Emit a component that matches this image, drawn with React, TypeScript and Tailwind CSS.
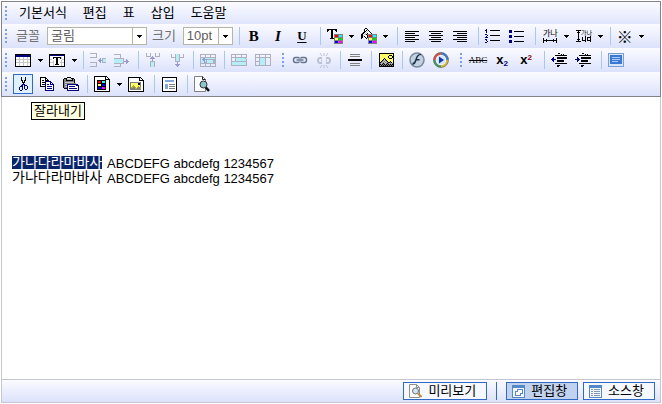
import type { ReactNode } from "react";

const PALETTE: Record<string, string> = {
  k: "#000000",
  w: "#ffffff",
  g: "#808080",
  s: "#c6c6c6",
  n: "#000080",
  y: "#ffff66",
  o: "#b8b02a",
  r: "#ff0000",
  c: "#00ffff",
  l: "#00e000",
  b: "#0000ff",
  m: "#ff00ff",
  a: "#aeb0bf",
  t: "#b6eef8",
  v: "#9a98d6",
  i: "#e8e4d8",
  p: "#7fa8dc",
};

function Bitmap({ rows }: { rows: string[] }) {
  const width = Math.max(...rows.map((row) => row.length));
  const cells: ReactNode[] = [];
  rows.forEach((row, y) => {
    let x = 0;
    while (x < row.length) {
      let end = x + 1;
      while (end < row.length && row[end] === row[x]) end += 1;
      if (row[x] !== ".") {
        cells.push(<rect key={`${x}-${y}`} x={x} y={y} width={end - x} height={1} fill={PALETTE[row[x]]} />);
      }
      x = end;
    }
  });
  return (
    <svg width={width} height={rows.length} viewBox={`0 0 ${width} ${rows.length}`} shapeRendering="crispEdges" aria-hidden="true">
      {cells}
    </svg>
  );
}

const TABLE = [
  "kkkkkkkkkkkkkkkk",
  "knnnnnnnnnnnnnnk",
  "knnnnnnnnnnnnnnk",
  "kwwwswwwswwwswwk",
  "kwwwswwwswwwswwk",
  "kssssssssssssssk",
  "kwwwswwwswwwswwk",
  "kwwwswwwswwwswwk",
  "kssssssssssssssk",
  "kwwwswwwswwwswwk",
  "kwwwswwwswwwswwk",
  "kwwwswwwswwwswwk",
  "kkkkkkkkkkkkkkkk",
];

const TEXT_TABLE = [
  "kkkkkkkkkkkkkkkk",
  "knnnnnnnnnnnnnnk",
  "kwwwwwwwwwwwwwwk",
  "kwwwkkkkkkkkswwk",
  "kwwwkwwkkwwkswwk",
  "ksswwwwkkwwwwssk",
  "kwwwswwkkwwwswwk",
  "kwwwswwkkwwwswwk",
  "ksssswwkkwwssssk",
  "kwwwswwkkwwwswwk",
  "kwwwswkkkkwwswwk",
  "kwwwswwwwwwwswwk",
  "kkkkkkkkkkkkkkkk",
];

const ROW_INSERT = [
  "aaaaaaa.........",
  "......a.........",
  "......a.........",
  "......a.........",
  "aaaaaaa.........",
  "..........v.aaaa",
  ".........vv.attt",
  "........vvvvattt",
  ".........vv.attt",
  "aaaaaaa...v.aaaa",
  "......a.........",
  "......a.........",
  "......a.........",
  "aaaaaaa.........",
];

const ROW_DELETE = [
  "aaaaaaa.........",
  "......a.........",
  "......a.........",
  "......a.........",
  "aaaaaaaaaa......",
  "ttttttttta..v...",
  "ttttttttta..vv..",
  "tttttttttavvvvv.",
  "ttttttttta..vv..",
  "aaaaaaaaaa..v...",
  "......a.........",
  "......a.........",
  "aaaaaaa.........",
];

const COL_INSERT = [
  "a...a....a...a",
  "a...a....a...a",
  "a...a....a...a",
  "aaaaa.v..aaaaa",
  ".....vvv......",
  "....vvvvv.....",
  "......v.......",
  "......v.......",
  "....aaaaa.....",
  "....attta.....",
  "....attta.....",
  "....attta.....",
  "....attta.....",
  "....attta.....",
];

const COL_DELETE = [
  "a...attta...a",
  "a...attta...a",
  "a...attta...a",
  "aaaaatttaaaaa",
  "....attta....",
  "....attta....",
  "....attta....",
  "....aaaaa....",
  "......v......",
  "......v......",
  "....vvvvv....",
  ".....vvv.....",
  "......v......",
];

const CELL_PROPERTY = [
  "aaaaaaaaaaaaaaaa",
  "a....a....a....a",
  "a....a....a....a",
  "aaaaaaaaaaaaaaaa",
  "attvvtttttttttta",
  "atvvvvvaaaaaaaaa",
  "attvvtattttttaaa",
  "atttvtattttttaaa",
  "atttvvattttttaaa",
  "aaaaaaaaaaaaaaaa",
  "a....a....a....a",
  "a....a....a....a",
  "aaaaaaaaaaaaaaaa",
];

const CELL_MERGE = [
  "aaaaaaaaaaaaaaaa",
  "a...a.....a....a",
  "a...a.....a....a",
  "aaaaaaaaaaaaaaaa",
  "a...attttttttta.",
  "a...atttttttttta",
  "a...atttttttttta",
  "aaaaaaaaaaaaaaaa",
  "atttttttttttttta",
  "atttttttttttttta",
  "atttttttttttttta",
  "aaaaaaaaaaaaaaaa",
];

const CELL_SPLIT = [
  "aaaaaaaaaaaaaaaa",
  "a...a.....a....a",
  "a...a.....a....a",
  "aaaaaaaaaaaaaaaa",
  "a...attttta....a",
  "a...attttta....a",
  "a...attttta....a",
  "aaaaattttta....a",
  "a...attttta....a",
  "a...attttta....a",
  "a...attttta....a",
  "aaaaaaaaaaaaaaaa",
];

const CUT = [
  "..k...k..",
  "..k...k..",
  "..k...k..",
  "..kk.kk..",
  "...k.k...",
  "...kkk...",
  "....k....",
  "...nnn...",
  "..nn.nnn.",
  ".nnn.n..n",
  "n..n.n..n",
  "n..n.n..n",
  "n..n..nn.",
  ".nn......",
];

const COPY = [
  "kkkkkk.........",
  "kwwwwkk........",
  "kwwwwkwk.......",
  "kwkkwkkkk......",
  "kwwwwnnnnnn....",
  "kwkkknwwwwnn...",
  "kwwwwnwwwwnwn..",
  "kwkkknwnnwnnnn.",
  "kwwwwnwwwwwwwn.",
  "kkkkknwnnnnnwn.",
  ".....nwwwwwwwn.",
  ".....nwnnnnnwn.",
  ".....nwwwwwwwn.",
  ".....nnnnnnnnn.",
];

const PASTE = [
  "....kkkk........",
  ".kkkswwskkk.....",
  "kggkssssskgk....",
  "kggkkkkkkkgk....",
  "kggggggggggk....",
  "kgsssssssssk....",
  "kgggggggggggg...",
  "kgssnnnnnnnnnnn.",
  "kgggnwwwwwwwwnnn",
  "kgssnwnnnnnnwwwn",
  "kgggnwwwwwwwwwwn",
  ".kkknwnnnnnnnnwn",
  "....nwwwwwwwwwwn",
  "....nnnnnnnnnnnn",
];

const COLOR_DOC = [
  "kkkkkkkkkkkkk...",
  "kwwwwwwwwwwkwk..",
  "kwwwwwwwwwwkwwk.",
  "kwwwwwwwwwwkkkkk",
  "kwwkkkkkkkkkwwwk",
  "kwwkrrrkccckwwwk",
  "kwwkrrrkccckwwwk",
  "kwwkkkkkkkkkwwwk",
  "kwwkyyykbbbkwwwk",
  "kwwkyyykbbbkwwwk",
  "kwwkkkkkkkkkwwwk",
  "kwwkbbbkmmmkwwwk",
  "kwwkbbbkmmmkwwwk",
  "kwwkkkkkkkkkwwwk",
  "kwwwwwwwwwwwwwwk",
  "kkkkkkkkkkkkkkkk",
];

const IMAGE_DOC = [
  "kkkkkkkkkkkkk...",
  "kwwwwwwwwwwkwk..",
  "kwwwwwwwwwwkwwk.",
  "kwwwwwwwwwwkkkkk",
  "kwwwwwwwwwwwwwwk",
  "kwgggggggggggwwk",
  "kwgyyyyyyykkgwwk",
  "kwgyyyyyyykkgwwk",
  "kwgyyoyyyyyygwwk",
  "kwgyoooyyyoygwwk",
  "kwgooggoyoggowwk",
  "kwgggggoogggowwk",
  "kwgggggggggggwwk",
  "kwwwwwwwwwwwwwwk",
  "kkkkkkkkkkkkkkkk",
];

const LAYOUT = [
  "kkkkkkkkkkkkkkk",
  "kwwwwwwwwwwwwwk",
  "kwwwwwwwwwwwwwk",
  "kwwpppppppppwwk",
  "kwwpppppppppwwk",
  "kwwwwwwwwwwwwwk",
  "kwwwwwwwwwwwwwk",
  "kwwpppwggggggwk",
  "kwwpppwwwwwwwwk",
  "kwwpppwggggggwk",
  "kwwpppwwwwwwwwk",
  "kwwpppwggggggwk",
  "kwwwwwwwwwwwwwk",
  "kwwwwwwwwwwwwwk",
  "kkkkkkkkkkkkkkk",
];

const PICTURE = [
  "kkkkkkkkkkkkkkk",
  "kyyyyyyyyyyyyyk",
  "kyyyyyyyyykkkyk",
  "kyyyyyyyykyyykk",
  "kyyyyyyyykyyykk",
  "kyyyykyyyykkkyk",
  "kyyykskyyyyyyyk",
  "kyykgsgkyyyyyyk",
  "kykgsgsgkyykyyk",
  "kkgsgsgsgkkgkyk",
  "kgsgkgsgkgsgsgk",
  "kkgkgkgkgkgkgkk",
  "kgkgkgkgkgkgkgk",
  "kkkkkkkkkkkkkkk",
];

const RULE = [
  "..gggggggggg..",
  "..............",
  "..gggggggggg..",
  "..............",
  "..............",
  "kkkkkkkkkkkkkk",
  "kkkkkkkkkkkkkk",
  "..............",
  "..............",
  "..gggggggggg..",
  "..............",
  "..gggggggggg..",
];

const FONT_COLOR = [
  "kkkkkkkkkk......",
  "kk..kk..kk......",
  "k...kk...k......",
  "....kk..........",
  "....kk..........",
  "....kk.ggggggggg",
  "....kk.grrrgcccg",
  "....kk.grrrgcccg",
  "....kk.ggggggggg",
  "...kkkkgyyyglllg",
  ".......gyyyglllg",
  ".......ggggggggg",
  ".......gbbbgmmmg",
  ".......gbbbgmmmg",
  ".......ggggggggg",
];

const FILL_COLOR = [
  "....kk..........",
  "...k..k.........",
  "...k.kwk........",
  "...kkwswk.......",
  "..kkwswwwk......",
  ".kkwswkwwwk.....",
  "kkwsskgggggggggg",
  "kkswwwkgrrrgcccg",
  "kk.kwwkgrrrgcccg",
  "kk..kwkggggggggg",
  "k....k.gyyyglllg",
  ".......gyyyglllg",
  ".......ggggggggg",
  ".......gbbbgmmmg",
  ".......gbbbgmmmg",
  ".......ggggggggg",
];

const ALIGN_LEFT = [
  "kkkkkkkkkkkkkk",
  "..............",
  "kkkkkkkkkk....",
  "..............",
  "kkkkkkkkkkkkkk",
  "..............",
  "kkkkkkkkkk....",
  "..............",
  "kkkkkkkkkkkkkk",
  "..............",
  "kkkkkkkkkk....",
];

const ALIGN_CENTER = ALIGN_LEFT.map((row, index) => (index % 4 === 2 ? "..kkkkkkkkkk.." : row));
const ALIGN_RIGHT = ALIGN_LEFT.map((row, index) => (index % 4 === 2 ? "....kkkkkkkkkk" : row));

const ORDERED = [
  ".n.............",
  "nn...kkkkkkkkkk",
  ".n.............",
  ".n.............",
  "...............",
  "nn.............",
  "..n..kkkkkkkkkk",
  ".n.............",
  "nnn............",
  "...............",
  "nn.............",
  ".n...kkkkkkkkkk",
  "..n............",
  "nn.............",
];

const BULLETS = [
  "nnn............",
  "nnn..kkkkkkkkkk",
  "nnn............",
  "...............",
  "...............",
  "nnn............",
  "nnn..kkkkkkkkkk",
  "nnn............",
  "...............",
  "...............",
  "nnn............",
  "nnn..kkkkkkkkkk",
  "nnn............",
];

const OUTDENT = [
  ".......kk.......",
  "..........k.k...",
  "....kkkkkkkkkkkk",
  "................",
  "..n...kkkkkkkkkk",
  ".nn...kkkkkkkkkk",
  "nnnnn...........",
  ".nn...kkkkkkk...",
  "..n...kkkkkkk...",
  "................",
  "....kkkkkkkkkkkk",
  "................",
  "......kkk.......",
  "......kk........",
];

const INDENT = OUTDENT.map((row, index) => {
  if (index === 4 || index === 8) return "..n" + row.slice(3);
  if (index === 5 || index === 7) return "..nn" + row.slice(4);
  return row;
});

function Arrow() {
  return (
    <svg width="5" height="3" viewBox="0 0 5 3" shapeRendering="crispEdges" aria-hidden="true">
      <path d="M0 0h5v1H0zM1 1h3v1H1zM2 2h1v1H2z" />
    </svg>
  );
}

function LinkIcon({ broken = false }: { broken?: boolean }) {
  return (
    <svg width="16" height="16" viewBox="0 0 16 16" fill="none" aria-hidden="true">
      <g stroke={broken ? "#bcc2d6" : "#66758f"} strokeWidth={broken ? 2 : 1.5}>
        <path d={broken ? "M6 6H4Q2 6 2 8.500T4 11H6M10 6h2q2 0 2 2.500T12 11h-2" : "M7.500 6.500Q7 5.500 6 5.500H3.500Q1.500 5.500 1.500 8T3.500 10.500H6Q7 10.500 7.500 9.500M8.500 6.500Q9 5.500 10 5.500h2.500q2 0 2 2.500t-2 2.500H10Q9 10.500 8.500 9.500"} />
        <path d={broken ? "M5 8.500h1M10 8.500h1" : "M4.500 8h7"} />
      </g>
      {broken && <path d="M8 1v3M4 1l2 3M12 1l-2 3M8 13v3M4 16l2-3M12 16l-2-3" stroke="#bcc2d6" />}
    </svg>
  );
}

function FlashIcon() {
  return (
    <svg width="16" height="16" viewBox="0 0 16 16" aria-hidden="true">
      <circle cx="8" cy="8" r="7" fill="#c3d2e0" stroke="#76899c" strokeWidth="1.500" />
      <path d="M12 3Q9 3 8 7H10.500V8.500H7.500Q6.500 12.500 3.500 13V11Q5.500 10.500 7 5.500Q8.500 1.500 12 2z" fill="#18304c" />
    </svg>
  );
}

function MediaIcon() {
  return (
    <svg width="16" height="16" viewBox="0 0 16 16" fill="none" aria-hidden="true">
      <circle cx="8" cy="8" r="6.500" fill="#fff" />
      <g strokeWidth="2.500">
        <path d="M1.500 8A6.500 6.500 0 0 1 8 1.500" stroke="#d8553a" />
        <path d="M8 1.500A6.500 6.500 0 0 1 14.500 8" stroke="#477bc4" />
        <path d="M14.500 8A6.500 6.500 0 0 1 8 14.500" stroke="#d4b440" />
        <path d="M8 14.500A6.500 6.500 0 0 1 1.500 8" stroke="#4c9a58" />
      </g>
      <circle cx="8" cy="8" r="7.500" stroke="#4a6078" strokeWidth="0.500" />
      <circle cx="8" cy="8" r="4.500" fill="#d5e6ff" />
      <path d="M6 4.500L11 8l-5 3.500z" fill="#1237b4" />
    </svg>
  );
}

function SearchDoc() {
  return (
    <svg width="16" height="16" viewBox="0 0 16 16" fill="none" aria-hidden="true">
      <path d="M.5 15.500V.5H8.500L11.500 3.500V15.500z" fill="#fff" stroke="#808080" />
      <path d="M8.500.5v3h3" stroke="#202020" />
      <path d="M11.500 11l3.500 4" stroke="#101010" strokeWidth="2.500" />
      <circle cx="9.500" cy="8.500" r="3.500" fill="#8fc6cc" stroke="#303030" />
    </svg>
  );
}

function PreviewIcon() {
  return (
    <svg width="13" height="14" viewBox="0 0 13 14" fill="none" aria-hidden="true">
      <path d="M.5 13.500V.5H7.500L10.500 3.500V13.500z" fill="#fff" stroke="#909090" />
      <path d="M7.500.5v3h3" stroke="#909090" />
      <path d="M9 9.500l3.500 3.500" stroke="#c98a3c" strokeWidth="2" />
      <circle cx="6.500" cy="7" r="3" fill="#cfe6fa" stroke="#707070" />
    </svg>
  );
}

function ScreenIcon() {
  return (
    <svg width="16" height="14" viewBox="0 0 16 14" shapeRendering="crispEdges" aria-hidden="true">
      <path d="M0 0h16v14H0z" fill="#7d9fce" />
      <path d="M1 1h14v12H1z" fill="#d5e5fa" />
      <path d="M2 2h12v9H2z" fill="#3c78d8" />
      <path d="M4 4h8v1H4zM4 6h8v1H4zM4 8h6v1H4z" fill="#a8ccff" />
    </svg>
  );
}

function SpacingIcon({ vertical = false }: { vertical?: boolean }) {
  return (
    <svg width="18" height="22" viewBox="-1 -3 18 22" aria-hidden="true">
      {vertical ? (
        <>
          <text x="5" y="7" fontSize="6" fontFamily="'Noto Sans CJK KR', sans-serif">가나</text>
          <path d="M0 2h5v1H0zM0 13h5v1H0zM2 3h1v10H2zM1 4h3v1H1zM1 11h3v1H1z" shapeRendering="crispEdges" />
          <path d="M6 9h1v4H6zM6 12h3v1H6zM9 8h1v6H9zM11 9h3v1h-3zM11 12h3v1h-3zM11 9h1v4h-1zM14 8h1v6h-1z" shapeRendering="crispEdges" />
        </>
      ) : (
        <>
          <text x="1" y="8" fontSize="8" fontFamily="'Noto Sans CJK KR', sans-serif">가나</text>
          <path d="M1 10h1v5H1zM14 10h1v5h-1zM2 12h12v1H2zM4 11h1v3H4zM11 11h1v3h-1z" shapeRendering="crispEdges" />
        </>
      )}
    </svg>
  );
}

function WindowIcon() {
  return (
    <svg width="13" height="13" viewBox="0 0 13 13" shapeRendering="crispEdges" aria-hidden="true">
      <path d="M0 0h13v13H0z" fill="#5588c6" />
      <path d="M1 3h11v9H1z" fill="#f4f9ff" />
      <path d="M5 4h6v5H5zM3 6h6v5H3z" fill="#5588c6" />
      <path d="M6 5h4v3H6zM4 7h4v3H4z" fill="#fff" />
    </svg>
  );
}

function SourceIcon() {
  return (
    <svg width="13" height="13" viewBox="0 0 13 13" shapeRendering="crispEdges" aria-hidden="true">
      <path d="M0 0h13v13H0z" fill="#5588c6" />
      <path d="M1 3h11v9H1z" fill="#f4f9ff" />
      <path d="M2 4h2v1H2zM5 4h6v1H5zM2 6h2v1H2zM5 6h6v1H5zM2 8h2v1H2zM5 8h6v1H5zM2 10h2v1H2zM5 10h6v1H5z" fill="#8397b0" />
    </svg>
  );
}

function Grip() {
  return (
    <span className="ml-[3px] mr-1 flex w-0.5 shrink-0 flex-col gap-0.5" aria-hidden="true">
      <span className="h-0.5 bg-[#7d9fe4]" />
      <span className="h-0.5 bg-[#7d9fe4]" />
      <span className="h-0.5 bg-[#7d9fe4]" />
      <span className="h-0.5 bg-[#7d9fe4]" />
    </span>
  );
}

function Sep({ wide = false }: { wide?: boolean }) {
  return <span className={`${wide ? "ml-1.5" : "ml-1"} mr-0.5 h-[18px] w-px shrink-0 bg-[#a9c6f5]`} aria-hidden="true" />;
}

function Tool({ label, children, disabled }: { label: string; children: ReactNode; disabled?: boolean }) {
  return (
    <button type="button" aria-label={label} disabled={disabled} className="flex h-6 w-6 shrink-0 items-center justify-center">
      {children}
    </button>
  );
}

function More({ label }: { label: string }) {
  return (
    <button type="button" aria-label={label} className="flex h-6 w-2.5 shrink-0 items-center justify-center">
      <Arrow />
    </button>
  );
}

function Bar({ children }: { children: ReactNode }) {
  return <div className="flex h-6 items-center bg-linear-to-b from-[#fbfbff] to-[#dce2fb]">{children}</div>;
}

function Picker({ id, value, width }: { id: string; value: string; width: string }) {
  return (
    <span className={`relative flex h-[18px] shrink-0 ${width}`}>
      <select id={id} className="h-full w-full appearance-none border border-[#b4b5a6] bg-white pl-[3px] text-[13px] leading-4 text-[#5c5c5c]">
        <option>{value}</option>
      </select>
      <span className="pointer-events-none absolute inset-y-0 right-0 flex w-[15px] items-center justify-center border border-[#b4b5a6]">
        <Arrow />
      </span>
    </span>
  );
}

function ViewButton({ icon, children, active }: { icon: ReactNode; children: ReactNode; active?: boolean }) {
  return (
    <button
      type="button"
      aria-pressed={active}
      className={`flex h-[18px] items-center gap-1.5 border border-[#316ac5] pl-[5px] pr-2.5 leading-4 ${active ? "bg-[#c1d2ee]" : "bg-[#f6f8ff]"}`}
    >
      {icon}
      {children}
    </button>
  );
}

export default function App() {
  return (
    <div className="flex min-h-screen flex-col bg-white p-px font-['Liberation_Sans','Noto_Sans_CJK_KR',sans-serif] text-[13px] leading-4 text-black">
      <header className="border border-[#848488]">
        <nav className="flex h-[22px] items-center bg-linear-to-b from-[#fbfbff] to-[#e0e5fc]">
          <Grip />
          <div className="ml-2 flex gap-4">
            <button type="button">기본서식</button>
            <button type="button">편집</button>
            <button type="button">표</button>
            <button type="button">삽입</button>
            <button type="button">도움말</button>
          </div>
        </nav>

        <Bar>
          <Grip />
          <label htmlFor="font" className="ml-[5px] mr-[7px] shrink-0 text-[#707070]">글꼴</label>
          <Picker id="font" value="굴림" width="w-[100px]" />
          <label htmlFor="size" className="ml-[5px] mr-[7px] shrink-0 text-[#707070]">크기</label>
          <Picker id="size" value="10pt" width="w-[50px]" />
          <Sep wide />
          <Tool label="굵게"><b className="font-['Liberation_Serif',serif] text-[15px] font-black">B</b></Tool>
          <Tool label="기울임"><b className="font-['Liberation_Serif',serif] text-[15px] italic">I</b></Tool>
          <Tool label="밑줄"><b className="font-['Liberation_Serif',serif] text-[13px] underline underline-offset-2">U</b></Tool>
          <Sep wide />
          <Tool label="글자색"><Bitmap rows={FONT_COLOR} /></Tool>
          <More label="글자색 선택" />
          <Tool label="배경색"><Bitmap rows={FILL_COLOR} /></Tool>
          <More label="배경색 선택" />
          <Sep wide />
          <Tool label="왼쪽 정렬"><Bitmap rows={ALIGN_LEFT} /></Tool>
          <Tool label="가운데 정렬"><Bitmap rows={ALIGN_CENTER} /></Tool>
          <Tool label="오른쪽 정렬"><Bitmap rows={ALIGN_RIGHT} /></Tool>
          <Sep wide />
          <Tool label="번호 목록"><Bitmap rows={ORDERED} /></Tool>
          <Tool label="글머리 목록"><Bitmap rows={BULLETS} /></Tool>
          <Sep wide />
          <Tool label="자간"><SpacingIcon /></Tool>
          <More label="자간 선택" />
          <Tool label="줄 간격"><SpacingIcon vertical /></Tool>
          <More label="줄 간격 선택" />
          <Sep />
          <Tool label="특수문자"><span className="font-['Noto_Sans_CJK_KR',sans-serif] text-base leading-4">※</span></Tool>
          <More label="특수문자 선택" />
        </Bar>

        <Bar>
          <Grip />
          <Tool label="표"><Bitmap rows={TABLE} /></Tool>
          <More label="표 선택" />
          <Tool label="글상자"><Bitmap rows={TEXT_TABLE} /></Tool>
          <More label="글상자 선택" />
          <Sep />
          <Tool label="행 삽입" disabled><Bitmap rows={ROW_INSERT} /></Tool>
          <Tool label="행 삭제" disabled><Bitmap rows={ROW_DELETE} /></Tool>
          <Sep />
          <Tool label="열 삽입" disabled><Bitmap rows={COL_INSERT} /></Tool>
          <Tool label="열 삭제" disabled><Bitmap rows={COL_DELETE} /></Tool>
          <Sep />
          <Tool label="셀 속성" disabled><Bitmap rows={CELL_PROPERTY} /></Tool>
          <Sep />
          <Tool label="셀 합치기" disabled><Bitmap rows={CELL_MERGE} /></Tool>
          <Tool label="셀 나누기" disabled><Bitmap rows={CELL_SPLIT} /></Tool>
          <span className="ml-1 flex"><Grip /></span>
          <Tool label="링크"><LinkIcon /></Tool>
          <Tool label="링크 해제" disabled><LinkIcon broken /></Tool>
          <Sep />
          <Tool label="가로줄"><Bitmap rows={RULE} /></Tool>
          <Sep />
          <Tool label="그림"><Bitmap rows={PICTURE} /></Tool>
          <Sep />
          <Tool label="플래시"><FlashIcon /></Tool>
          <Tool label="미디어"><MediaIcon /></Tool>
          <span className="ml-1 flex"><Grip /></span>
          <Tool label="취소선"><s className="font-['Liberation_Serif',serif] text-[9px]">ABC</s></Tool>
          <Tool label="아래 첨자">
            <span className="font-bold leading-3">x<sub className="text-[8px] text-[#000080]">2</sub></span>
          </Tool>
          <Tool label="위 첨자">
            <span className="font-bold leading-3">x<sup className="text-[8px] text-[#900000]">2</sup></span>
          </Tool>
          <Sep wide />
          <Tool label="내어쓰기"><Bitmap rows={OUTDENT} /></Tool>
          <Tool label="들여쓰기"><Bitmap rows={INDENT} /></Tool>
          <Sep wide />
          <Tool label="전체 화면"><ScreenIcon /></Tool>
        </Bar>

        <Bar>
          <Grip />
          <span className="relative flex">
            <button type="button" aria-describedby="tip" aria-label="잘라내기" className="mx-0.5 flex size-5 items-center justify-center border border-[#316ac5] bg-[#dff1ff]">
              <Bitmap rows={CUT} />
            </button>
            <span id="tip" role="tooltip" className="absolute left-5 top-7 z-10 border border-black bg-[#ffffe1] px-0.5 whitespace-nowrap">
              잘라내기
            </span>
          </span>
          <Tool label="복사"><Bitmap rows={COPY} /></Tool>
          <Tool label="붙여넣기"><Bitmap rows={PASTE} /></Tool>
          <Sep />
          <Tool label="문서 색"><Bitmap rows={COLOR_DOC} /></Tool>
          <More label="문서 색 선택" />
          <Tool label="문서 배경"><Bitmap rows={IMAGE_DOC} /></Tool>
          <Sep wide />
          <Tool label="레이아웃"><Bitmap rows={LAYOUT} /></Tool>
          <Sep wide />
          <Tool label="찾기"><SearchDoc /></Tool>
        </Bar>
      </header>

      <main
        contentEditable
        suppressContentEditableWarning
        role="textbox"
        aria-label="본문"
        aria-multiline="true"
        className="flex-1 border-x border-[#c6c6d0] px-2.5 pt-[59px] leading-[15px] outline-none"
      >
        <p>
          <mark className="mr-0.5 inline-block h-[13px] bg-[#0a246a] align-top text-sm leading-[13px] text-white">가나다라마바사</mark> ABCDEFG abcdefg 1234567
        </p>
        <p>
          <span className="mr-0.5 inline-block h-[13px] align-top text-sm leading-[13px]">가나다라마바사</span> ABCDEFG abcdefg 1234567
        </p>
      </main>

      <footer className="flex h-6 items-center justify-end gap-[5px] border border-[#c6c6d0] bg-linear-to-b from-[#fbfbff] to-[#dce2fb] pr-[5px]">
        <ViewButton icon={<PreviewIcon />}>미리보기</ViewButton>
        <span className="mx-1 h-[18px] w-px bg-[#316ac5]" aria-hidden="true" />
        <ViewButton active icon={<WindowIcon />}>편집창</ViewButton>
        <ViewButton icon={<SourceIcon />}>소스창</ViewButton>
      </footer>
    </div>
  );
}
